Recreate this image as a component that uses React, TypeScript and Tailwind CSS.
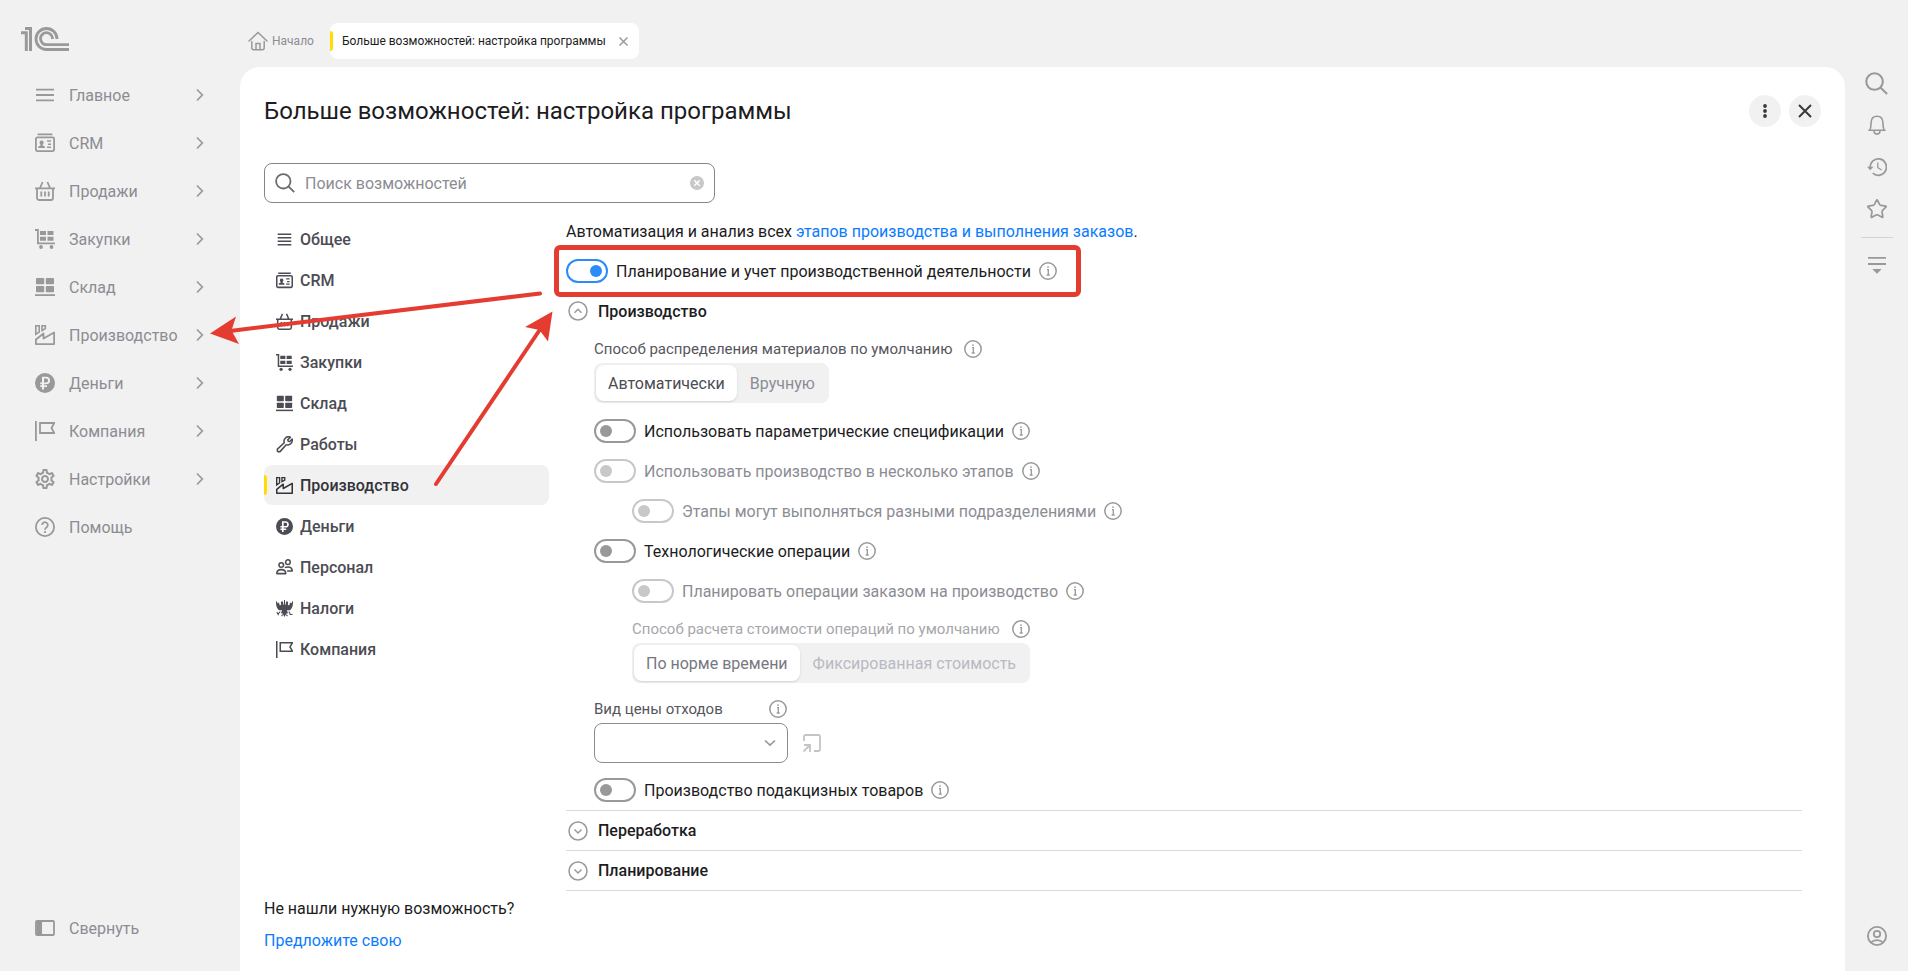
import { useState } from "react";
import type { ReactNode } from "react";
import { Star } from "lucide-react";
import { MdOutlineSettings } from "react-icons/md";

type IconProps = { size?: number };

function Svg({ size = 20, children }: { size?: number; children: ReactNode }) {
  return (
    <svg
      width={size}
      height={size}
      viewBox="0 0 20 20"
      fill="none"
      stroke="currentColor"
      strokeWidth="1.8"
      aria-hidden="true"
      className="shrink-0"
    >
      {children}
    </svg>
  );
}

const MenuIcon = ({ size }: IconProps) => (
  <Svg size={size}>
    <path d="M1 4.7h18M1 10h18M1 15.3h18" />
  </Svg>
);

const ListIcon = ({ size }: IconProps) => (
  <Svg size={size}>
    <path d="M2 3.8h16M2 7.9h16M2 12.1h16M2 16.2h16" />
  </Svg>
);

const CrmIcon = ({ size }: IconProps) => (
  <Svg size={size}>
    <path d="M2.6 1.4h14.8M2.4 4.4h15.2a1.5 1.5 0 0 1 1.5 1.5v10.7a1.5 1.5 0 0 1-1.5 1.5H2.4a1.5 1.5 0 0 1-1.5-1.5V5.9a1.5 1.5 0 0 1 1.5-1.5z" />
    <path d="M12 8h4M13 11.2h3M12 14.2h4" strokeWidth="1.5" />
    <path d="M4.6 9a2.1 2.1 0 0 1 4 0c.2 1-.2 2-.9 2.700v.7l2.200 1V15H3.300v-1.600l2.200-1v-.7C4.800 11 4.400 10 4.600 9z" fill="currentColor" stroke="none" />
  </Svg>
);

const BasketIcon = ({ size }: IconProps) => (
  <Svg size={size}>
    <path d="M0 7.300h20M2 7.500v9.600a1.900 1.900 0 0 0 1.900 1.900h12.200a1.900 1.900 0 0 0 1.900-1.900V7.500M5 7l2.600-6M15 7l-2.600-6M6.300 10.500v5M10 10.500v5M13.700 10.500v5" />
  </Svg>
);

const CartIcon = ({ size }: IconProps) => (
  <Svg size={size}>
    <path d="M0 1h2.900v13.300H20" />
    <circle cx="6" cy="18" r="1.900" fill="currentColor" stroke="none" />
    <circle cx="16.500" cy="18" r="1.900" fill="currentColor" stroke="none" />
    <path d="M5 2h6v4H5zM12.500 2h6v4h-6zM5 7.800h6v4H5zM12.500 7.800h6v4h-6z" fill="currentColor" stroke="none" />
  </Svg>
);

const StockIcon = ({ size }: IconProps) => (
  <Svg size={size}>
    <g fill="currentColor" stroke="none">
      <rect x="1" y="1" width="8.200" height="6.300" rx="0.800" />
      <rect x="10.800" y="1" width="8.200" height="6.300" rx="0.800" />
      <rect x="1" y="9" width="8.200" height="6.300" rx="0.800" />
      <rect x="10.800" y="9" width="8.200" height="6.300" rx="0.800" />
      <rect x="0" y="17.200" width="20" height="1.800" />
    </g>
  </Svg>
);

const FactoryIcon = ({ size }: IconProps) => (
  <Svg size={size}>
    <path d="M.9 19.100V14.500l7.600-6v5l10.600-6v11.600z" strokeLinejoin="round" />
    <path d="M.8 9.300V.8h3.400v6.200zM7 5.500V.8h3.300v2.800z" strokeWidth="1.600" />
  </Svg>
);

const RubleIcon = ({ size }: IconProps) => (
  <Svg size={size}>
    <path
      fillRule="evenodd"
      d="M10 0a10 10 0 1 1 0 20 10 10 0 0 1 0-20zM7 3.800v5.700H5.200v1.800H7v1H5.200V14H7v2.500h2V14h3v-1.700H9v-1h2.300c2.300 0 3.800-1.500 3.800-3.700s-1.500-3.800-3.800-3.800zm2 1.800h2.200c1.200 0 1.900.8 1.900 2s-.7 1.900-1.900 1.900H9z"
      fill="currentColor"
      stroke="none"
    />
  </Svg>
);

const FlagIcon = ({ size }: IconProps) => (
  <Svg size={size}>
    <path d="M.9 0v20M5 2h14.300l-2.800 5 2.800 5H5z" />
  </Svg>
);

const HelpIcon = ({ size }: IconProps) => (
  <Svg size={size}>
    <circle cx="10" cy="10" r="9.100" />
    <path d="M7.200 8a2.800 2.800 0 1 1 4.500 2.200C10.500 11 10 11.500 10 12.700M10 14v2" />
  </Svg>
);

const WrenchIcon = ({ size }: IconProps) => (
  <Svg size={size}>
    <path
      d="M12 1.500c2-1 3.800-.8 5 0l-3.200 3 .6 1.700 1.900.4L19 3.500c.6 3.600-1 6.500-4.500 7-1 .1-1.800 0-2.500-.3L5.300 17.800c-.9 1-2.300 1.200-3.200.3s-.8-2.300.2-3.200L9.700 8c-.8-2.600.3-5.200 2.300-6.500z"
      strokeLinejoin="round"
    />
  </Svg>
);

const PeopleIcon = ({ size }: IconProps) => (
  <Svg size={size}>
    <circle cx="14" cy="3.700" r="2.700" />
    <circle cx="6.200" cy="7" r="2.700" />
    <path d="M.9 17.200c0-3 2.200-4.700 5.300-4.700s5.300 1.700 5.300 4.700zM10.500 10.300c.9-.7 2-1 3.500-1 3.200 0 5.100 2 5.100 4.900h-6" strokeLinejoin="round" />
  </Svg>
);

const EagleIcon = ({ size }: IconProps) => (
  <Svg size={size}>
    <path
      d="M0 1c-.3 5 1 9 3.500 11h3.700l-1.400 3.500 2 .3L10 20l2.200-4.200 2-.3-1.400-3.500h3.700C19 10 20.300 6 20 1l-2.300 3-1.200-1.300-.8 3.500-1.700-.4.300-3L12.800 1l-1.500 2.500.6 2.500L10 4.500 8.100 6l.6-2.500L7.200 1 5.700 2.800l.3 3-1.700.4-.8-3.500L2.300 4z"
      fill="currentColor"
      stroke="none"
    />
    <path d="M10 0v5M5 13.500l-3 3.700M1 14l2 4M15 13.500l2 3.500M16 17h3.500M8 17l-1.500 2M12 17l1.500 2" strokeWidth="1.200" />
  </Svg>
);

const CollapseIcon = ({ size }: IconProps) => (
  <Svg size={size}>
    <rect x="1" y="3" width="18" height="14" rx="1" />
    <path d="M1.500 3h5.500v14H1.500z" fill="currentColor" stroke="none" />
  </Svg>
);

const HomeIcon = ({ size }: IconProps) => (
  <Svg size={size}>
    <path d="M1 10l9-8.500 9 8.500M3.800 10.500v6.300a2 2 0 0 0 2 2h8.400a2 2 0 0 0 2-2v-6.300M8 18.500v-6h4v6" strokeLinecap="round" strokeWidth="1.500" />
  </Svg>
);

const InfoIcon = () => (
  <svg width="18" height="18" viewBox="0 0 18 18" fill="none" stroke="currentColor" strokeWidth="1.500" aria-hidden="true">
    <circle cx="9" cy="9" r="8.200" />
    <path d="M8 7.700h1.300V13M7.700 13h3M9 4.300v1.700" strokeWidth="1.300" />
  </svg>
);

const SearchIcon = ({ size = 20 }: IconProps) => (
  <Svg size={size}>
    <circle cx="8.300" cy="8.300" r="7.200" />
    <path d="M13.400 13.400l5.800 5.800" />
  </Svg>
);

const BellIcon = () => (
  <Svg>
    <path d="M1.300 15.300h17.400M3 15c1-2 1-4 1.100-7.500C4.200 3.500 6.500 1.200 10 1.200s5.800 2.300 5.900 6.300c.1 3.500.1 5.500 1.100 7.500M7 15.500c0 2.500 1.200 3.600 3 3.600s3-1.100 3-3.600" strokeWidth="1.600" />
  </Svg>
);

const HistoryIcon = () => (
  <Svg>
    <path d="M3.100 11A8.200 8.200 0 1 1 5.800 16.200" />
    <path d="M10.800 5.500v5.200l4 2.300" strokeWidth="1.300" />
    <path d="M0 9.700h6.600l-3.500 3.500z" fill="currentColor" stroke="none" />
  </Svg>
);

const FilterIcon = () => (
  <Svg>
    <path d="M1 2.800h18M1 9h18" />
    <path d="M5.300 14h9.400L10 18.700z" fill="currentColor" stroke="none" />
  </Svg>
);

const UserIcon = () => (
  <Svg>
    <circle cx="10" cy="10" r="9.100" />
    <circle cx="10" cy="8" r="3.200" />
    <path d="M4 16.500c3-3.300 9-3.300 12 0" />
  </Svg>
);

const ChevronRight = () => (
  <svg width="8" height="14" viewBox="0 0 8 14" fill="none" stroke="currentColor" strokeWidth="1.700" aria-hidden="true">
    <path d="M1 1.500L6.300 7 1 12.500" />
  </svg>
);

const Logo = () => (
  <svg width="48" height="24" viewBox="0 0 48 24" fill="none" stroke="currentColor" strokeWidth="3" role="img" aria-label="1С">
    <path d="M4 1.500h5.500V24M0 5.700h5.300V24" />
    <path d="M36 12A10.500 10.500 0 1 0 25.500 22.500H48M31.500 12a6 6 0 1 0-6 5.700H48" strokeWidth="2.800" />
  </svg>
);

const sections = [
  { label: "Главное", icon: MenuIcon },
  { label: "CRM", icon: CrmIcon },
  { label: "Продажи", icon: BasketIcon },
  { label: "Закупки", icon: CartIcon },
  { label: "Склад", icon: StockIcon },
  { label: "Производство", icon: FactoryIcon },
  { label: "Деньги", icon: RubleIcon },
  { label: "Компания", icon: FlagIcon },
  { label: "Настройки", icon: () => <MdOutlineSettings size={24} className="-m-0.5 shrink-0" /> },
  { label: "Помощь", icon: HelpIcon, leaf: true },
];

const categories = [
  { label: "Общее", icon: ListIcon },
  { label: "CRM", icon: CrmIcon },
  { label: "Продажи", icon: BasketIcon },
  { label: "Закупки", icon: CartIcon },
  { label: "Склад", icon: StockIcon },
  { label: "Работы", icon: WrenchIcon },
  { label: "Производство", icon: FactoryIcon },
  { label: "Деньги", icon: RubleIcon },
  { label: "Персонал", icon: PeopleIcon },
  { label: "Налоги", icon: EagleIcon },
  { label: "Компания", icon: FlagIcon },
];

function InfoButton() {
  return (
    <button type="button" aria-label="Справка" className="shrink-0 text-[#999]">
      <InfoIcon />
    </button>
  );
}

function ToggleRow({
  id,
  label,
  on = false,
  disabled = false,
  highlighted = false,
}: {
  id: string;
  label: string;
  on?: boolean;
  disabled?: boolean;
  highlighted?: boolean;
}) {
  const [checked, setChecked] = useState(on);
  return (
    <div className="flex h-10 items-center">
      <div className="relative flex items-center gap-2">
        <input
          id={id}
          type="checkbox"
          role="switch"
          checked={checked}
          disabled={disabled}
          onChange={() => setChecked(!checked)}
          className="relative h-6 w-[42px] shrink-0 appearance-none rounded-full border-2 border-[#999] before:absolute before:left-1 before:top-1 before:size-3 before:rounded-full before:bg-[#999] checked:border-[#2a8bf9] checked:before:left-[22px] checked:before:bg-[#2a8bf9] disabled:border-[#c8c8c8] disabled:before:bg-[#c8c8c8]"
        />
        <label htmlFor={id} className={disabled ? "pt-px text-[#8c8c94]" : "pt-px text-[#1c1c22]"}>
          {label}
        </label>
        <InfoButton />
        {highlighted && (
          <span className="pointer-events-none absolute -bottom-3.5 -left-3 -right-6 -top-3.5 rounded-md border-[5px] border-[#e53c31]" />
        )}
      </div>
    </div>
  );
}

function Segmented({
  id,
  legend,
  options,
  disabled = false,
}: {
  id: string;
  legend: string;
  options: string[];
  disabled?: boolean;
}) {
  const [active, setActive] = useState(0);
  return (
    <div role="group" aria-labelledby={id}>
      <div className="mt-1 flex h-7 items-center gap-3 text-[15px]">
        <span id={id} className={disabled ? "text-[#a6a6ac]" : "text-[#56565c]"}>
          {legend}
        </span>
        <InfoButton />
      </div>
      <div className="inline-flex h-10 gap-px rounded-lg bg-[#f1f1f1] p-0.5 align-top">
        {options.map((option, i) => {
          const tone =
            i === active
              ? disabled
                ? "bg-white shadow text-[#77777f]"
                : "bg-white shadow text-[#4c4c54]"
              : disabled
                ? "text-[#b9b9c1]"
                : "text-[#8c8c94]";
          return (
            <button
              key={option}
              type="button"
              disabled={disabled}
              aria-pressed={i === active}
              onClick={() => setActive(i)}
              className={`rounded-lg px-3 pt-px ${tone}`}
            >
              {option}
            </button>
          );
        })}
      </div>
    </div>
  );
}

function GroupButton({ label, open = false }: { label: string; open?: boolean }) {
  return (
    <button type="button" aria-expanded={open} className="flex h-[39px] items-center gap-2.5 pl-0.5 font-medium text-[#1c1c22]">
      <svg width="20" height="20" viewBox="0 0 20 20" fill="none" stroke="#999" strokeWidth="1.500" aria-hidden="true">
        <circle cx="10" cy="10" r="9" />
        <path d={open ? "M6.500 11.700L10 8.300l3.500 3.400" : "M6.500 8.500L10 12l3.500-3.500"} />
      </svg>
      <span className="pt-px">{label}</span>
    </button>
  );
}

function Sidebar() {
  return (
    <aside className="flex w-60 shrink-0 flex-col text-[#8c8c94]">
      <div className="flex h-[71px] items-start pl-[21px] pt-[27px] text-[#999]">
        <Logo />
      </div>
      <nav className="flex flex-col">
        {sections.map(({ label, icon: Icon, leaf }) => (
          <a key={label} href="#" className="flex h-12 items-center gap-3.5 pl-[35px] pr-9">
            <span className="flex text-[#999]">
              <Icon />
            </span>
            <span className="flex-1 pt-px">{label}</span>
            {!leaf && (
              <span className="text-[#999]">
                <ChevronRight />
              </span>
            )}
          </a>
        ))}
      </nav>
      <button type="button" className="mb-[19px] mt-auto flex h-12 items-center gap-3.5 pl-[35px]">
        <span className="text-[#999]">
          <CollapseIcon />
        </span>
        <span className="pt-px">Свернуть</span>
      </button>
    </aside>
  );
}

function TabBar() {
  return (
    <header className="flex h-[67px] items-end pb-2 text-xs">
      <a href="#" className="flex h-9 items-center gap-1 pl-2 text-[#8c8c94]">
        <span className="text-[#999]">
          <HomeIcon />
        </span>
        Начало
      </a>
      <div className="relative ml-4 flex h-9 items-center gap-3 rounded-lg bg-white pl-3 pr-2.5 text-[#1c1c22]">
        <span className="absolute left-0 top-2 h-5 w-[3px] rounded-r-sm bg-[#ffdd00]" />
        Больше возможностей: настройка программы
        <button type="button" aria-label="Закрыть вкладку" className="text-[#999]">
          <svg width="11" height="11" viewBox="0 0 11 11" stroke="currentColor" strokeWidth="1.500" aria-hidden="true">
            <path d="M1.500 1.500l8 8M9.500 1.500l-8 8" />
          </svg>
        </button>
      </div>
    </header>
  );
}

function CategoryNav() {
  return (
    <div className="flex w-[285px] shrink-0 flex-col pt-4">
      <nav className="flex flex-col gap-px font-medium">
        {categories.map(({ label, icon: Icon }) => {
          const current = label === "Производство";
          return (
            <a
              key={label}
              href="#"
              aria-current={current ? "page" : undefined}
              className={`relative flex h-10 items-center gap-[7px] rounded-lg pl-3 ${
                current ? "bg-[#f1f1f1] text-[#33333a]" : "text-[#4c4c54]"
              }`}
            >
              {current && <span className="absolute left-0 top-2.5 h-5 w-[3px] rounded-r-sm bg-[#ffdd00]" />}
              <Icon size={17} />
              <span className="pt-px">{label}</span>
            </a>
          );
        })}
      </nav>
      <div className="mb-3.5 mt-auto flex flex-col items-start">
        <p className="h-8 leading-8 text-[#1c1c22]">Не нашли нужную возможность?</p>
        <a href="#" className="h-8 leading-8 text-[#0a7cff]">
          Предложите свою
        </a>
      </div>
    </div>
  );
}

function Settings() {
  return (
    <section className="ml-[17px] mr-[19px] flex-1 pt-2">
      <p className="flex h-10 items-center pt-px text-[#1c1c22]">
        <span>
          Автоматизация и анализ всех{" "}
          <a href="#" className="text-[#0a7cff]">
            этапов производства и выполнения заказов
          </a>
          .
        </span>
      </p>
      <ToggleRow id="planning" label="Планирование и учет производственной деятельности" on highlighted />
      <div className="flex h-10 items-center">
        <GroupButton label="Производство" open />
      </div>
      <div className="pl-7">
        <Segmented id="materials" legend="Способ распределения материалов по умолчанию" options={["Автоматически", "Вручную"]} />
        <div className="mt-2">
          <ToggleRow id="parametric" label="Использовать параметрические спецификации" />
          <ToggleRow id="stages" label="Использовать производство в несколько этапов" disabled />
          <div className="pl-[38px]">
            <ToggleRow id="departments" label="Этапы могут выполняться разными подразделениями" disabled />
          </div>
          <ToggleRow id="operations" label="Технологические операции" />
          <div className="pl-[38px]">
            <ToggleRow id="order" label="Планировать операции заказом на производство" disabled />
            <Segmented
              id="costing"
              legend="Способ расчета стоимости операций по умолчанию"
              options={["По норме времени", "Фиксированная стоимость"]}
              disabled
            />
          </div>
        </div>
        <div className="mt-3 flex h-7 w-[193px] items-center justify-between text-[15px] text-[#56565c]">
          <label htmlFor="price">Вид цены отходов</label>
          <InfoButton />
        </div>
        <div className="flex items-center gap-[15px]">
          <div className="relative">
            <select id="price" className="h-10 w-[194px] appearance-none rounded-lg border border-[#8c8c8c] bg-white pl-3 pr-8">
              <option />
            </select>
            <svg
              width="12"
              height="8"
              viewBox="0 0 12 8"
              fill="none"
              stroke="#999"
              strokeWidth="1.700"
              aria-hidden="true"
              className="pointer-events-none absolute right-3 top-4"
            >
              <path d="M1 1.500l5 4.700 5-4.700" />
            </svg>
          </div>
          <button type="button" aria-label="Открыть" className="text-[#c4c4c4]">
            <svg width="18" height="18" viewBox="0 0 18 18" fill="none" stroke="currentColor" strokeWidth="1.800" aria-hidden="true">
              <path d="M1 7V2.500A1.500 1.500 0 0 1 2.500 1h13A1.500 1.500 0 0 1 17 2.500v13a1.500 1.500 0 0 1-1.500 1.500H11M1 11h6v7M6.500 11.500l-6 6" />
            </svg>
          </button>
        </div>
        <div className="mt-[7px]">
          <ToggleRow id="excise" label="Производство подакцизных товаров" />
        </div>
      </div>
      <div className="border-y border-[#d9d9d9]">
        <GroupButton label="Переработка" />
      </div>
      <div className="border-b border-[#d9d9d9]">
        <GroupButton label="Планирование" />
      </div>
    </section>
  );
}

function Panel() {
  return (
    <main className="flex flex-1 flex-col rounded-t-[20px] bg-white px-6">
      <div className="flex items-center justify-between pt-7">
        <h1 className="text-2xl leading-8 text-[#1c1c22]">Больше возможностей: настройка программы</h1>
        <div className="flex gap-2 text-[#3a3a3a]">
          <button type="button" aria-label="Ещё" className="flex size-8 items-center justify-center rounded-full bg-[#f1f1f1]">
            <svg width="4" height="14" viewBox="0 0 4 14" fill="currentColor" aria-hidden="true">
              <circle cx="2" cy="2" r="1.900" />
              <circle cx="2" cy="7" r="1.900" />
              <circle cx="2" cy="12" r="1.900" />
            </svg>
          </button>
          <button type="button" aria-label="Закрыть" className="flex size-8 items-center justify-center rounded-full bg-[#f1f1f1]">
            <svg width="14" height="14" viewBox="0 0 14 14" stroke="currentColor" strokeWidth="2" aria-hidden="true">
              <path d="M1 1l12 12M13 1L1 13" />
            </svg>
          </button>
        </div>
      </div>
      <div className="mt-9 flex h-10 w-[451px] items-center rounded-lg border border-[#858585] pl-2.5 pr-2.5">
        <span className="text-[#6b6b6b]">
          <SearchIcon />
        </span>
        <input
          type="search"
          aria-label="Поиск возможностей"
          placeholder="Поиск возможностей"
          className="ml-2.5 flex-1 bg-transparent pt-px outline-none placeholder:text-[#8c8c94]"
        />
        <button type="button" aria-label="Очистить">
          <svg width="14" height="14" viewBox="0 0 14 14" aria-hidden="true">
            <circle cx="7" cy="7" r="7" fill="#c8c8c8" />
            <path d="M4.300 4.300l5.400 5.400M9.700 4.300L4.300 9.700" stroke="#fff" strokeWidth="1.500" />
          </svg>
        </button>
      </div>
      <div className="flex flex-1">
        <CategoryNav />
        <Settings />
      </div>
    </main>
  );
}

function Rail() {
  return (
    <aside className="flex w-[63px] shrink-0 flex-col items-center pt-[62px] text-[#999]">
      <button type="button" aria-label="Поиск" className="flex h-[42px] items-center">
        <SearchIcon size={23} />
      </button>
      <button type="button" aria-label="Уведомления" className="flex h-[42px] items-center">
        <BellIcon />
      </button>
      <button type="button" aria-label="История" className="flex h-[42px] items-center">
        <HistoryIcon />
      </button>
      <button type="button" aria-label="Избранное" className="flex h-[42px] items-center">
        <Star size={22} strokeWidth={1.9} />
      </button>
      <hr className="mt-[7px] w-8 border-[#d4d4d4]" />
      <button type="button" aria-label="Настройка панели" className="mt-[17px] flex">
        <FilterIcon />
      </button>
      <button type="button" aria-label="Пользователь" className="mb-[25px] mt-auto flex">
        <UserIcon />
      </button>
    </aside>
  );
}

function Arrows() {
  return (
    <svg
      width="600"
      height="520"
      viewBox="0 0 600 520"
      aria-hidden="true"
      className="pointer-events-none absolute left-0 top-0"
      stroke="#e53c31"
      strokeWidth="4"
      strokeLinecap="round"
    >
      <path d="M540 293.500L230 331" />
      <path d="M210 333.500L236 316.500l-4.500 14L239 344z" fill="#e53c31" stroke="none" />
      <path d="M436 484L541 328" />
      <path d="M552.500 311.500L525 327l14.500 3 8.500 11.500z" fill="#e53c31" stroke="none" />
    </svg>
  );
}

export default function App() {
  return (
    <div className="relative flex min-h-screen bg-[#f1f1f1] font-['Roboto',sans-serif] text-base leading-5">
      <Sidebar />
      <div className="flex min-w-0 flex-1 flex-col">
        <TabBar />
        <Panel />
      </div>
      <Rail />
      <Arrows />
    </div>
  );
}
